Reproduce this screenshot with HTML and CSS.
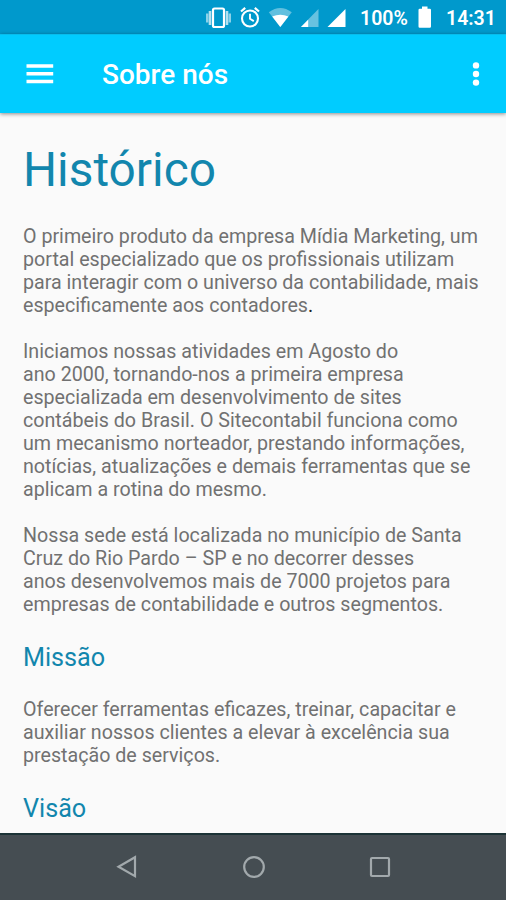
FILE: index.html
```html
<!DOCTYPE html>
<html lang="pt-BR">
<head>
<meta charset="utf-8">
<title>Sobre nós</title>
<link rel="stylesheet" href="styles.css">
</head>
<body>
<div class="screen">
  <div class="status">
    <svg class="status-icons" width="150" height="34" viewBox="0 0 150 34">
      <g fill="none" stroke="#fff">
        <path d="M7.200 13.500v9M29.800 13.500v9" stroke-width="2.400" opacity=".55"/>
        <path d="M10 11v14M27 11v14" stroke-width="2.600" opacity=".7"/>
        <rect x="13" y="8.500" width="11" height="18.500" rx="1.500" stroke-width="2.200"/>
        <circle cx="50" cy="18.500" r="8" stroke-width="2.100"/>
        <path d="M50 13.800v5l3.800 2.300" stroke-width="1.900"/>
        <path d="M41 11.500l4.200-3.600M59 11.500l-4.200-3.600" stroke-width="2.200"/>
      </g>
      <path d="M68.800 12.300Q80.300 3.800 91.800 12.300L80.300 27z" fill="#fff" opacity=".38"/>
      <path d="M72.200 16.600Q80.300 12.800 88.400 16.600L80.300 27z" fill="#fff"/>
      <path d="M101 27V26.800L118.500 9v18z" fill="#fff" opacity=".4"/>
      <path d="M101 27l7.200-7.300V27z" fill="#fff"/>
      <path d="M127.500 27L145.500 9v18z" fill="#fff"/>
    </svg>
    <span class="percent">100%</span>
    <svg class="battery" width="14" height="34" viewBox="0 0 14 34"><path d="M1.700 8.700H4V6.500h5.500v2.200h2.300q1.200 0 1.200 1.200v16.700q0 1.200-1.200 1.200H1.700Q.5 27.800.5 26.600V9.900q0-1.200 1.200-1.200z" fill="#fff"/></svg>
    <span class="clock">14:31</span>
  </div>
  <header class="appbar">
    <svg class="menu" width="28" height="22" viewBox="0 0 28 22"><path d="M.5 2.100h26.700M.5 9.800h26.700M.5 17.500h26.700" stroke="#fff" stroke-width="3.500"/></svg>
    <h1 class="title">Sobre nós</h1>
    <svg class="more" width="8" height="26" viewBox="0 0 8 26"><g fill="#fff"><circle cx="4" cy="3.400" r="3.200"/><circle cx="4" cy="12" r="3.200"/><circle cx="4" cy="20.600" r="3.200"/></g></svg>
  </header>
  <main class="content">
    <h2 class="heading">Histórico</h2>
    <p class="text">O primeiro produto da empresa Mídia Marketing, um<br>portal especializado que os profissionais utilizam<br>para interagir com o universo da contabilidade, mais<br>especificamente aos contadores<span class="dot">.</span></p>
    <p class="text">Iniciamos nossas atividades em Agosto do<br>ano 2000, tornando-nos a primeira empresa<br>especializada em desenvolvimento de sites<br>contábeis do Brasil. O Sitecontabil funciona como<br>um mecanismo norteador, prestando informações,<br>notícias, atualizações e demais ferramentas que se<br>aplicam a rotina do mesmo.</p>
    <p class="text">Nossa sede está localizada no município de Santa<br>Cruz do Rio Pardo – SP e no decorrer desses<br>anos desenvolvemos mais de 7000 projetos para<br>empresas de contabilidade e outros segmentos.</p>
    <h3 class="subheading">Missão</h3>
    <p class="text">Oferecer ferramentas eficazes, treinar, capacitar e<br>auxiliar nossos clientes a elevar à excelência sua<br>prestação de serviços.</p>
    <h3 class="subheading">Visão</h3>
  </main>
  <nav class="navbar">
    <svg width="24" height="24" viewBox="0 0 24 24"><path d="M20 2.200v19L3.500 11.700z"/></svg>
    <svg width="24" height="24" viewBox="0 0 24 24"><circle cx="12" cy="12" r="9.800"/></svg>
    <svg width="24" height="24" viewBox="0 0 24 24"><rect x="3" y="3" width="18" height="18" rx="1"/></svg>
  </nav>
</div>
</body>
</html>
```
FILE: styles.css
```css
* { box-sizing: border-box; }
body { margin: 0; font-family: Roboto, sans-serif; }
.screen { width: 506px; height: 900px; display: flex; flex-direction: column; overflow: hidden; background: #fafafa; }
.status { height: 34px; flex: none; display: flex; align-items: center; padding-left: 200px; background: #0099cc; color: #fff; font-size: 19.500px; font-weight: 600; line-height: 34px; white-space: nowrap; }
.percent { width: 58px; padding-left: 10px; padding-top: 3px; }
.battery { margin-left: 10px; }
.clock { margin-left: 14px; padding-top: 3px; }
.appbar { height: 79px; flex: none; display: flex; align-items: center; padding: 2px 26px 0 26px; background: #00ccff; border-top: 1px solid #08bdec; box-shadow: 0 1px 4px rgba(0,0,0,.45); color: #fff; z-index: 1; }
.title { margin: 0 auto 0 48px; font-size: 28px; font-weight: 500; line-height: 32px; white-space: nowrap; }
.content { flex: 1; min-height: 0; overflow: hidden; padding: 29px 0 0 23px; }
.heading { margin: 0 0 27px; font-size: 47.800px; font-weight: 400; line-height: 57px; color: #1286ad; }
.text { margin: 0 0 23px; font-size: 19.660px; line-height: 22.970px; color: #717171; white-space: nowrap; }
.dot { color: #222; }
.subheading { margin: 0 0 23px; font-size: 25.200px; font-weight: 400; line-height: 36.900px; color: #1286ad; }
.navbar { height: 67px; flex: none; display: flex; align-items: center; justify-content: center; gap: 102.500px; padding: 0 0 2px 1px; background: #454d52; border-top: 2px solid #1c3336; }
.navbar svg { fill: none; stroke: #a2a9ac; stroke-width: 2.200; }
```
